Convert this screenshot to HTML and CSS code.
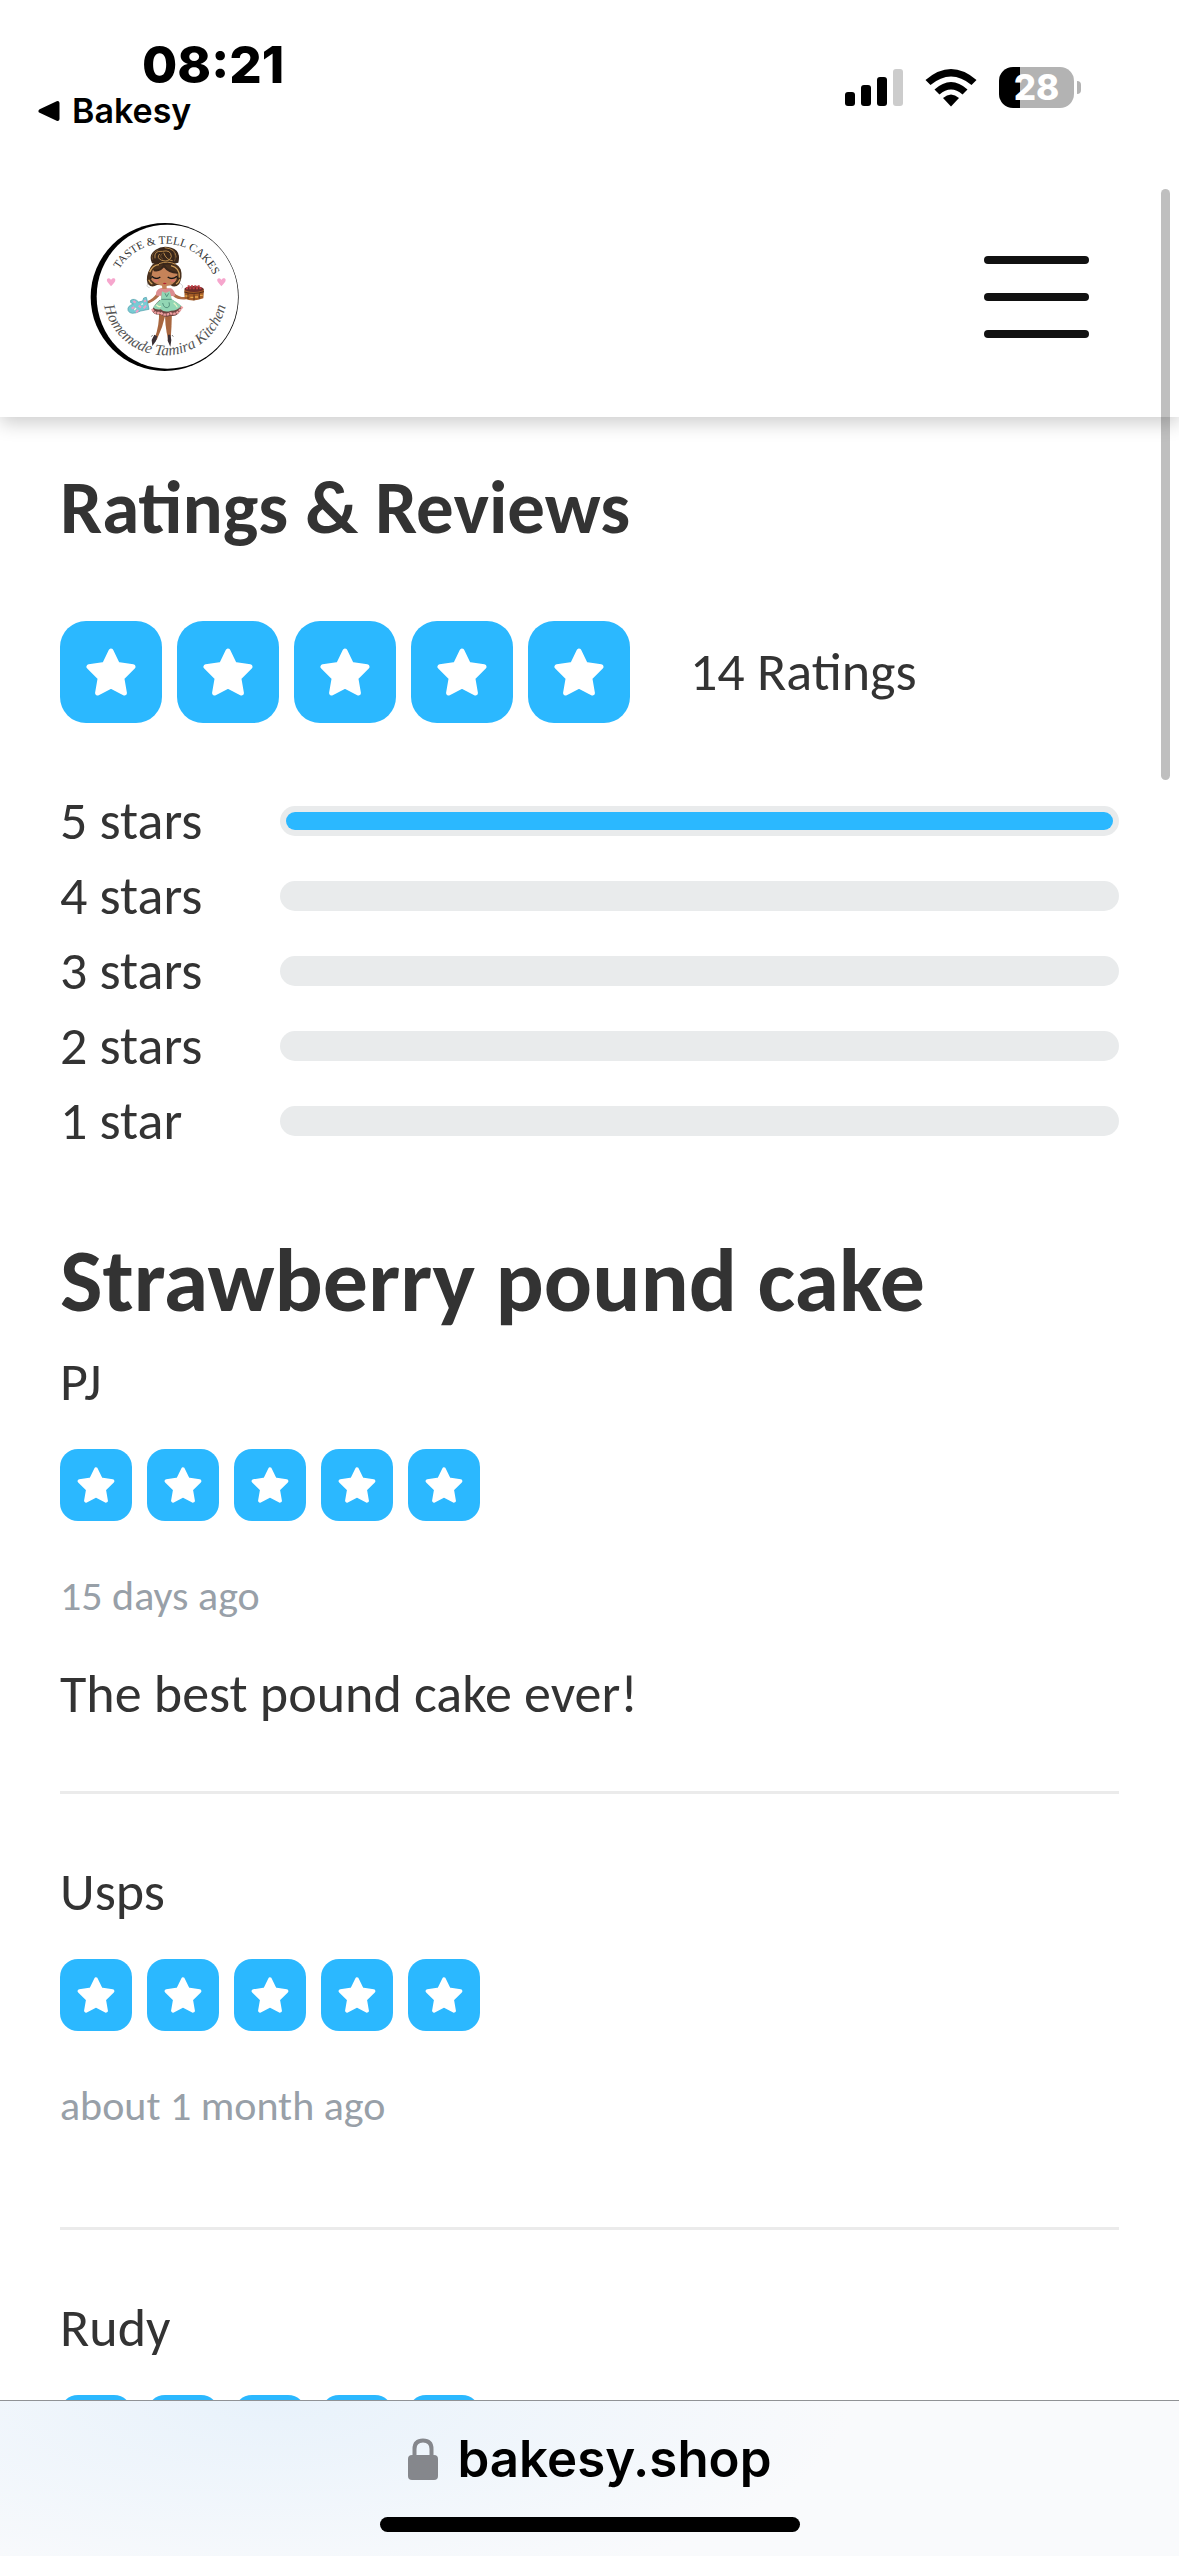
FILE: index.html
```html
<!DOCTYPE html>
<html lang="en">
	<head>
		<meta charset="utf-8">
		<meta name="viewport" content="width=device-width, initial-scale=1">
		<title>Ratings &amp; Reviews</title>
		<link rel="stylesheet" href="styles.css">
	</head>
	<body>
		<!-- shared shapes -->
		<svg class="defs" aria-hidden="true">
			<symbol id="star" viewBox="0 0 50 48">
				<path d="M25 3 L31.5 16.5 L47 18.8 L35.8 30 L38.4 45 L25 38 L11.6 45 L14.2 30 L3 18.8 L18.5 16.5 Z" fill="#fff" stroke="#fff" stroke-width="5" stroke-linejoin="round"/>
			</symbol>
		</svg>

		<div class="status">
			<div class="status-left">
				<time class="clock">08:21</time>
				<a class="back" href="#">
					<svg width="22" height="22" viewBox="0 0 22 22" aria-hidden="true"><path d="M2.500 11 L19.500 3 V19 Z" fill="#000" stroke="#000" stroke-width="4" stroke-linejoin="round"/></svg>
					Bakesy
				</a>
			</div>
			<div class="status-right">
				<svg width="58" height="38" viewBox="0 0 58 38" aria-hidden="true">
					<rect x="0" y="23" width="10" height="14" rx="3"/>
					<rect x="16" y="16" width="10" height="21" rx="3"/>
					<rect x="32" y="8" width="10" height="29" rx="3"/>
					<rect x="48" y="0" width="10" height="37" rx="3" fill="#ccc"/>
				</svg>
				<svg width="52" height="38" viewBox="0 0 52 38" aria-hidden="true">
					<path d="M0.500 11 Q26 -11 51.500 11 L46.500 16 Q26 -1 5.500 16 Z"/>
					<path d="M9.500 20.500 Q26 5.500 42.500 20.500 L37.500 25.500 Q26 15.500 14.500 25.500 Z"/>
					<path d="M18 29 Q26 22 34 29 L26 37.500 Z"/>
				</svg>
				<div class="battery"><span class="battery-level">28</span></div>
			</div>
		</div>

		<header class="header">
			<a class="logo" href="#" aria-label="Taste &amp; Tell Cakes">
				<svg viewBox="33 36 450 450">
					<circle cx="257" cy="261" r="222"/>
					<ellipse cx="265" cy="260" rx="212" ry="216" fill="#fff"/>
					<path id="arc-top" d="M97 261 A160 160 0 0 1 417 261" fill="none"/>
					<path id="arc-bottom" d="M72 250 A186 186 0 0 0 444 250" fill="none"/>
					<text class="logo-name"><textPath href="#arc-top" startOffset="52%" text-anchor="middle">TASTE &amp; TELL CAKES</textPath></text>
					<text class="logo-sub"><textPath href="#arc-bottom" startOffset="50%" text-anchor="middle">Homemade Tamira Kitchen</textPath></text>
					<!-- hearts -->
					<path d="M96 229 C88 219 82 214 84 208 C87 202 94 204 96 210 C99 204 107 203 109 209 C110 215 103 221 96 229 Z" fill="#f6a6cd"/>
					<path d="M427 229 C419 219 413 214 415 208 C418 202 425 204 427 210 C430 204 438 203 440 209 C441 215 434 221 427 229 Z" fill="#f6a6cd"/>
					<!-- legs and shoes -->
					<path d="M240 305 Q242 345 226 388 L233 390 Q252 350 261 308 Z" fill="#a8663f"/>
					<path d="M259 305 Q256 340 268 392 L275 391 Q278 345 279 305 Z" fill="#a8663f"/>
					<path d="M226 374 L218 390 L220 408 L231 393 L235 379 Z M267 374 L266 392 L274 410 L277 390 L274 374 Z" fill="#3b3035"/>
					<path d="M221 375 l-4 5 M279 375 l4 5" stroke="#444" stroke-width="2"/>
					<!-- arms -->
					<path d="M241 258 Q222 278 204 281 L206 273 Q222 267 234 249 Z M285 248 Q300 263 322 261 L321 268 Q297 271 281 257 Z" fill="#b06d48"/>
					<!-- dress -->
					<path d="M232 257 Q227 240 246 234 L276 235 Q288 242 289 257 L276 259 L277 278 L246 278 L246 257 Z" fill="#dd8d91"/>
					<path d="M242 270 Q224 286 219 302 Q227 317 244 313 Q257 325 274 317 Q296 324 310 292 Q298 279 280 270 Z" fill="#6d4440"/>
					<path d="M219 297 Q229 314 243 307 Q257 319 274 310 Q294 317 310 290" fill="none" stroke="#ef9e9f" stroke-width="7" stroke-dasharray="8 2"/>
					<path d="M249 244 Q260 253 272 243 L278 267 Q293 277 307 287 Q296 302 276 302 Q257 309 245 298 Q230 301 222 292 Q235 277 246 268 Z" fill="#92d6b4"/>
					<path d="M247 268 H278 M251 279 Q254 294 265 293 Q274 290 270 277 M258 250 L263 260 L269 250" fill="none" stroke="#366e61" stroke-width="2"/>
					<path d="M232 284 q10 10 13 4 M284 278 q11 10 10 14" fill="none" stroke="#e2f4c6" stroke-width="4"/>
					<!-- hair and face -->
					<path d="M215 171 Q225 151 257 154 Q292 154 305 178 Q312 200 301 222 Q288 235 275 226 L234 225 Q217 235 206 221 Q198 201 215 171 Z" fill="#49301d"/>
					<path d="M219 160 Q207 134 230 119 Q250 105 277 113 Q307 122 298 158 Q266 169 219 160 Z" fill="#39261a"/>
					<path d="M228 145 Q224 121 250 124 Q276 118 277 140 Q271 158 248 151 Q231 143 242 132 M254 128 Q262 151 281 152 M257 113 Q291 116 291 142 M240 161 Q266 151 290 163" fill="none" stroke="#b98a4c" stroke-width="3"/>
					<path d="M238 120 Q214 128 221 149 M250 130 Q239 140 252 148 M282 121 Q294 138 286 154" fill="none" stroke="#70502f" stroke-width="3"/>
					<path d="M221 181 Q240 184 255 171 Q269 188 296 188 L292 210 Q282 226 263 228 L263 237 L250 237 L249 227 Q222 221 216 207 Z" fill="#c58359"/>
					<path d="M225 181 Q246 184 254 167 Q271 190 299 188" fill="none" stroke="#39261a" stroke-width="6"/>
					<path d="M212 187 Q220 165 240 164 M276 167 Q304 174 301 203 M209 209 Q214 220 220 222 M303 208 Q298 219 291 222" fill="none" stroke="#d1a05c" stroke-width="4"/>
					<path d="M218 199 Q231 211 244 201 M266 201 Q280 211 294 199" fill="none" stroke="#151515" stroke-width="4"/>
					<path d="M219 203 l-5 2 M293 202 l5 3" stroke="#151515" stroke-width="3"/>
					<ellipse cx="231" cy="212" rx="7" ry="4" fill="#d9776b"/>
					<ellipse cx="282" cy="212" rx="7" ry="4" fill="#d9776b"/>
					<path d="M251 220 Q257 217 263 220 Q257 226 251 220 Z" fill="#b31f34"/>
					<path d="M207 221 q-8 9 5 12 M303 220 q13 8 5 15" fill="none" stroke="#bbb" stroke-width="2"/>
					<!-- oven mitt -->
					<path d="M205 273 L210 298 L185 303 Q154 318 147 301 Q144 288 163 282 Q151 279 155 271 Q166 263 179 276 L191 273 L194 264 L202 262 Z" fill="#78cbd4" stroke="#4f9ba7" stroke-width="2"/>
					<path d="M158 296 l8 -5 M171 307 l7 -7 M179 287 l7 5 M194 295 l7 -8 M163 273 l7 5 M195 274 l6 -2" stroke="#ee9fc8" stroke-width="6"/>
					<path d="M166 300 l5 -6 M187 284 l5 -3" stroke="#f9f4df" stroke-width="4"/>
					<!-- cake -->
					<path d="M316 239 Q344 227 375 238 L373 265 Q343 277 317 266 Z" fill="#a55c26"/>
					<path d="M316 246 Q343 255 375 245" fill="none" stroke="#522b1b" stroke-width="3"/>
					<path d="M319 258 h10 M334 262 h10 M348 261 h9 M361 256 h10" stroke="#e6a64c" stroke-width="4"/>
					<path d="M327 249 v18 M345 253 v18 M361 249 v17" stroke="#61331b" stroke-width="3"/>
					<ellipse cx="345" cy="237" rx="29" ry="9" fill="#6b2c29"/>
					<path d="M321 235 h48 M326 229 h39" stroke="#c13c44" stroke-width="6" stroke-dasharray="6 4"/>
				</svg>
			</a>
			<button class="menu" type="button" aria-label="Menu">
				<span></span>
				<span></span>
				<span></span>
			</button>
		</header>

		<main class="content">
			<h1>Ratings &amp; Reviews</h1>
			<div class="summary">
				<div class="stars stars-big" role="img" aria-label="5 out of 5">
					<span><svg><use href="#star"/></svg></span>
					<span><svg><use href="#star"/></svg></span>
					<span><svg><use href="#star"/></svg></span>
					<span><svg><use href="#star"/></svg></span>
					<span><svg><use href="#star"/></svg></span>
				</div>
				<p>14 Ratings</p>
			</div>

			<ul class="breakdown">
				<li><span>5 stars</span><div class="track"><div class="fill" style="width: 100%"></div></div></li>
				<li><span>4 stars</span><div class="track"><div class="fill" style="width: 0%"></div></div></li>
				<li><span>3 stars</span><div class="track"><div class="fill" style="width: 0%"></div></div></li>
				<li><span>2 stars</span><div class="track"><div class="fill" style="width: 0%"></div></div></li>
				<li><span>1 star</span><div class="track"><div class="fill" style="width: 0%"></div></div></li>
			</ul>

			<h2>Strawberry pound cake</h2>
			<article class="review">
				<h3>PJ</h3>
				<div class="stars" role="img" aria-label="5 out of 5">
					<span><svg><use href="#star"/></svg></span>
					<span><svg><use href="#star"/></svg></span>
					<span><svg><use href="#star"/></svg></span>
					<span><svg><use href="#star"/></svg></span>
					<span><svg><use href="#star"/></svg></span>
				</div>
				<p class="date">15 days ago</p>
				<p class="comment">The best pound cake ever!</p>
			</article>
			<article class="review">
				<h3>Usps</h3>
				<div class="stars" role="img" aria-label="5 out of 5">
					<span><svg><use href="#star"/></svg></span>
					<span><svg><use href="#star"/></svg></span>
					<span><svg><use href="#star"/></svg></span>
					<span><svg><use href="#star"/></svg></span>
					<span><svg><use href="#star"/></svg></span>
				</div>
				<p class="date">about 1 month ago</p>
			</article>
			<article class="review">
				<h3>Rudy</h3>
				<div class="stars" role="img" aria-label="5 out of 5">
					<span><svg><use href="#star"/></svg></span>
					<span><svg><use href="#star"/></svg></span>
					<span><svg><use href="#star"/></svg></span>
					<span><svg><use href="#star"/></svg></span>
					<span><svg><use href="#star"/></svg></span>
				</div>
			</article>
		</main>

		<footer class="browser">
			<button class="address" type="button">
				<svg width="30" height="42" viewBox="0 0 30 42" aria-hidden="true">
					<path d="M6.500 20 V11 Q6.500 2.500 15 2.500 Q23.500 2.500 23.500 11 V20" fill="none" stroke="#85878c" stroke-width="4"/>
					<rect x="0" y="17" width="30" height="25" rx="4" fill="#85878c"/>
				</svg>
				bakesy.shop
			</button>
			<div class="home"></div>
		</footer>
		<div class="scrollbar"></div>
	</body>
</html>
```
FILE: styles.css
```css
*{
	margin: 0;
	padding: 0;
	box-sizing: border-box;
}
body{
	display: flex;
	flex-direction: column;
	position: relative;
	height: 100vh;
	overflow: hidden;
	background: #fff;
	color: #333;
	font: 400 54px/60px Carlito, Lato, sans-serif;
}
button{
	border: 0;
	background: none;
	cursor: pointer;
}
svg{
	display: block;
}
.defs{
	position: absolute;
	width: 0;
	height: 0;
}

/* status bar */
.status{
	display: flex;
	justify-content: space-between;
	flex: none;
	height: 177px;
	padding: 40px 105px 0 38px;
	color: #000;
	font-family: Inter, sans-serif;
}
.clock{
	display: block;
	padding-left: 104px;
	font-size: 51px;
	font-weight: 800;
	line-height: 50px;
}
.back{
	display: flex;
	align-items: center;
	gap: 12px;
	color: #000;
	font-size: 34px;
	font-weight: 600;
	line-height: 42px;
	text-decoration: none;
}
.status-right{
	display: flex;
	align-items: center;
	gap: 22px;
	height: 95px;
}
.battery{
	position: relative;
	width: 75px;
	height: 41px;
	border-radius: 14px;
	background: linear-gradient(to right, #000 28%, #b3b3b3 28%);
	text-align: center;
}
.battery::after{
	content: "";
	position: absolute;
	top: 14px;
	right: -7px;
	width: 4px;
	height: 13px;
	border-radius: 0 4px 4px 0;
	background: #b3b3b3;
}
.battery-level{
	display: block;
	color: #fff;
	font-size: 35px;
	font-weight: 800;
	line-height: 41px;
}

/* site header */
.header{
	display: flex;
	justify-content: space-between;
	align-items: center;
	flex: none;
	position: relative;
	padding: 45px 90px;
	background: #fff;
	box-shadow: 0 6px 18px rgba(0, 0, 0, .2);
	clip-path: inset(0 0 -30px 0);
}
.logo{
	width: 150px;
	height: 150px;
}
.logo-name{
	fill: #333;
	font: 400 34px "Liberation Serif", serif;
}
.logo-sub{
	fill: #555;
	font: italic 400 46px "Liberation Serif", serif;
}
.menu{
	display: flex;
	flex-direction: column;
	gap: 29px;
	width: 105px;
}
.menu span{
	height: 8px;
	border-radius: 4px;
	background: #111;
}

/* ratings */
.content{
	flex: 1;
	min-height: 0;
	overflow: hidden;
	padding: 46px 60px 0;
}
h1{
	font-size: 75px;
	line-height: 90px;
}
h2{
	margin: 72px 0 22px;
	font-size: 90px;
	line-height: 100px;
}
.summary{
	display: flex;
	align-items: center;
	gap: 60px;
	margin-top: 68px;
}
.stars{
	display: flex;
	gap: 15px;
}
.stars span{
	display: flex;
	align-items: center;
	justify-content: center;
	width: 72px;
	height: 72px;
	border-radius: 18px;
	background: #2bb8ff;
}
.stars svg{
	width: 38px;
	height: 36px;
}
.stars-big span{
	width: 102px;
	height: 102px;
	border-radius: 26px;
}
.stars-big svg{
	width: 50px;
	height: 48px;
}
.breakdown{
	margin-top: 60px;
	list-style: none;
}
.breakdown li{
	display: grid;
	grid-template-columns: 220px 1fr;
	align-items: center;
	height: 75px;
}
.track{
	height: 30px;
	padding: 6px;
	border-radius: 15px;
	background: #e9ebec;
}
.fill{
	height: 18px;
	border-radius: 9px;
	background: #2bb8ff;
}

/* reviews */
.review{
	padding-bottom: 67px;
	border-bottom: 3px solid #ebebeb;
}
.review + .review{
	padding-top: 68px;
}
.review h3{
	margin-bottom: 37px;
	font-size: 54px;
	font-weight: 400;
}
.date{
	margin: 45px 0 24px;
	color: #98a0a8;
	font-size: 42px;
}
.comment{
	margin-top: 38px;
}

/* browser bar */
.browser{
	display: flex;
	flex-direction: column;
	align-items: center;
	flex: none;
	position: relative;
	padding: 28px 0 24px;
	border-top: 1px solid #909295;
	background: radial-gradient(ellipse 580px 200px at 23% 0, #e8f2fb, #f9fafc);
}
.address{
	display: flex;
	align-items: center;
	gap: 20px;
	margin-bottom: 28px;
	color: #000;
	font: 600 51px/60px Inter, sans-serif;
}
.home{
	width: 420px;
	height: 15px;
	border-radius: 8px;
	background: #000;
}
.scrollbar{
	position: absolute;
	top: 189px;
	right: 9px;
	width: 9px;
	height: 591px;
	border-radius: 5px;
	background: rgba(0, 0, 0, .25);
}
```
